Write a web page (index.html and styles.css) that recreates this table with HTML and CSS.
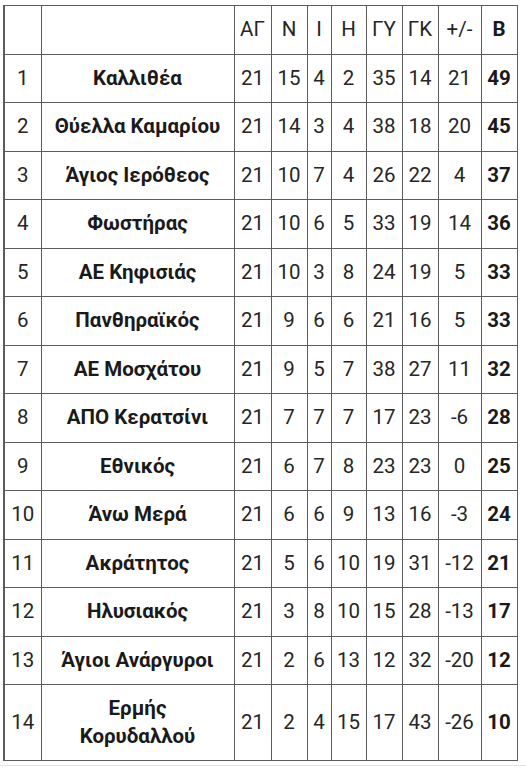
FILE: index.html
```html
<!DOCTYPE html>
<html lang="el">
<head>
<meta charset="utf-8">
<title>Βαθμολογία</title>
<link rel="stylesheet" href="styles.css">
</head>
<body>
<div class="frame">
<table class="standings">
<colgroup>
<col class="c-pos"><col class="c-team"><col class="c-ag"><col class="c-n"><col class="c-i"><col class="c-h"><col class="c-gy"><col class="c-gk"><col class="c-diff"><col class="c-pts">
</colgroup>
<thead>
<tr><th></th><th></th><th>ΑΓ</th><th>Ν</th><th>Ι</th><th>Η</th><th>ΓΥ</th><th>ΓΚ</th><th>+/-</th><th class="pts">Β</th></tr>
</thead>
<tbody>
<tr><td>1</td><td class="team">Καλλιθέα</td><td>21</td><td>15</td><td>4</td><td>2</td><td>35</td><td>14</td><td>21</td><td class="pts">49</td></tr>
<tr><td>2</td><td class="team">Θύελλα Καμαρίου</td><td>21</td><td>14</td><td>3</td><td>4</td><td>38</td><td>18</td><td>20</td><td class="pts">45</td></tr>
<tr><td>3</td><td class="team">Άγιος Ιερόθεος</td><td>21</td><td>10</td><td>7</td><td>4</td><td>26</td><td>22</td><td>4</td><td class="pts">37</td></tr>
<tr><td>4</td><td class="team">Φωστήρας</td><td>21</td><td>10</td><td>6</td><td>5</td><td>33</td><td>19</td><td>14</td><td class="pts">36</td></tr>
<tr><td>5</td><td class="team">ΑΕ Κηφισιάς</td><td>21</td><td>10</td><td>3</td><td>8</td><td>24</td><td>19</td><td>5</td><td class="pts">33</td></tr>
<tr><td>6</td><td class="team">Πανθηραϊκός</td><td>21</td><td>9</td><td>6</td><td>6</td><td>21</td><td>16</td><td>5</td><td class="pts">33</td></tr>
<tr><td>7</td><td class="team">ΑΕ Μοσχάτου</td><td>21</td><td>9</td><td>5</td><td>7</td><td>38</td><td>27</td><td>11</td><td class="pts">32</td></tr>
<tr><td>8</td><td class="team">ΑΠΟ Κερατσίνι</td><td>21</td><td>7</td><td>7</td><td>7</td><td>17</td><td>23</td><td>-6</td><td class="pts">28</td></tr>
<tr><td>9</td><td class="team">Εθνικός</td><td>21</td><td>6</td><td>7</td><td>8</td><td>23</td><td>23</td><td>0</td><td class="pts">25</td></tr>
<tr><td>10</td><td class="team">Άνω Μερά</td><td>21</td><td>6</td><td>6</td><td>9</td><td>13</td><td>16</td><td>-3</td><td class="pts">24</td></tr>
<tr><td>11</td><td class="team">Ακράτητος</td><td>21</td><td>5</td><td>6</td><td>10</td><td>19</td><td>31</td><td>-12</td><td class="pts">21</td></tr>
<tr><td>12</td><td class="team">Ηλυσιακός</td><td>21</td><td>3</td><td>8</td><td>10</td><td>15</td><td>28</td><td>-13</td><td class="pts">17</td></tr>
<tr><td>13</td><td class="team">Άγιοι Ανάργυροι</td><td>21</td><td>2</td><td>6</td><td>13</td><td>12</td><td>32</td><td>-20</td><td class="pts">12</td></tr>
<tr><td>14</td><td class="team">Ερμής Κορυδαλλού</td><td>21</td><td>2</td><td>4</td><td>15</td><td>17</td><td>43</td><td>-26</td><td class="pts">10</td></tr>
</tbody>
</table>
</div>
</body>
</html>
```

FILE: styles.css
```css
html, body {
  margin: 0;
  padding: 0;
  background: #ffffff;
}

.frame {
  padding: 5px 0 0 3px;
  border-bottom: 1px solid #e2e2e2;
  width: 523px;
  height: 760px;
}

.standings {
  border-collapse: collapse;
  table-layout: fixed;
  width: 513px;
  font-family: Roboto, "Noto Sans", sans-serif;
  font-size: 20.5px;
  color: #262626;
  border-left: 2px solid #5c5c5c;
}

.standings th,
.standings td {
  border: 1px solid #5c5c5c;
  padding: 10px 1px 10px 1px;
  line-height: 27.5px;
  text-align: center;
  font-weight: 400;
  overflow: hidden;
  white-space: normal;
}

.standings .team {
  font-weight: 700;
  color: #1a1a1a;
  padding-left: 8px;
  padding-right: 8px;
}

.standings .pts {
  font-weight: 700;
  color: #1a1a1a;
}

.c-pos { width: 37px; }
.c-team { width: 193px; }
.c-ag { width: 37px; }
.c-n { width: 36px; }
.c-i { width: 24px; }
.c-h { width: 35px; }
.c-gy { width: 36px; }
.c-gk { width: 36px; }
.c-diff { width: 43px; }
.c-pts { width: 36px; }
```
